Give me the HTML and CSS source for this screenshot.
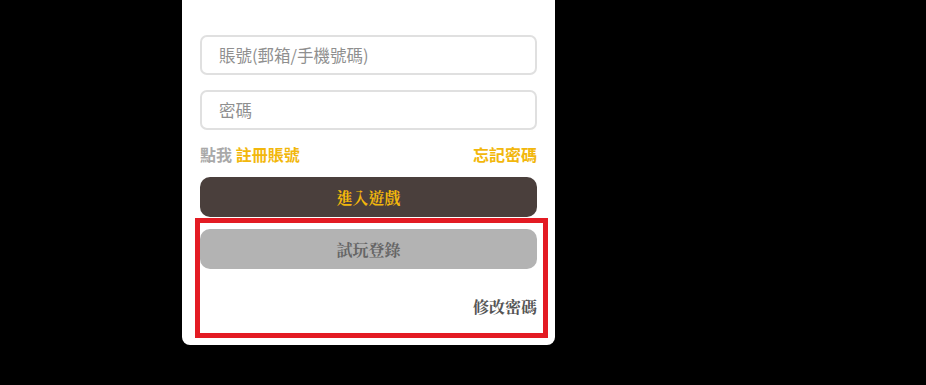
FILE: index.html
```html
<!DOCTYPE html>
<html lang="zh-Hant">
<head>
<meta charset="utf-8">
<title>登錄</title>
<link rel="stylesheet" href="styles.css">
</head>
<body>
<div class="page">
  <div class="card">
    <div class="field"><span class="placeholder">賬號(郵箱/手機號碼)</span></div>
    <div class="field"><span class="placeholder">密碼</span></div>
    <div class="links">
      <div class="reg"><span class="muted">點我</span> <span class="accent">註冊賬號</span></div>
      <span class="accent">忘記密碼</span>
    </div>
    <div class="btn btn-dark">進入遊戲</div>
    <div class="btn btn-gray">試玩登錄</div>
    <div class="change">修改密碼</div>
    <div class="highlight"></div>
  </div>
</div>
</body>
</html>
```
FILE: styles.css
```css
html, body {
  margin: 0;
  padding: 0;
  background: #000;
  height: 100%;
}
body {
  font-family: "Noto Sans CJK TC", "Noto Sans", sans-serif;
}
.page {
  padding-left: 182px;
}
.card {
  position: relative;
  width: 373px;
  box-sizing: border-box;
  background: #fff;
  border-radius: 0 0 8px 8px;
  padding: 35px 18px 26px;
}
.field {
  height: 40px;
  box-sizing: border-box;
  border: 2px solid #e0e0e0;
  border-radius: 7px;
  margin-bottom: 15px;
  display: flex;
  align-items: center;
  padding-left: 17px;
  padding-right: 14px;
}
.field + .field { margin-bottom: 0; }
.placeholder {
  color: #8f8f8f;
  font-size: 16.5px;
}
.links {
  margin-top: 12px;
  height: 24px;
  display: flex;
  justify-content: space-between;
  align-items: center;
  font-size: 16px;
  font-weight: 700;
  line-height: 24px;
}
.muted { color: #a9a9a9; }
.accent { color: #f2b70c; }
.btn {
  height: 40px;
  border-radius: 10px;
  display: flex;
  align-items: center;
  justify-content: center;
  font-size: 16px;
  font-weight: 700;
  font-family: "Noto Serif CJK TC", "Noto Sans CJK TC", serif;
}
.btn-dark {
  margin-top: 11px;
  background: #4a3f3c;
  color: #f2b70c;
}
.btn-gray {
  margin-top: 12px;
  background: #b3b3b3;
  color: #666;
}
.change {
  margin-top: 26px;
  height: 24px;
  line-height: 24px;
  text-align: right;
  font-size: 16px;
  font-weight: 700;
  color: #555;
  font-family: "Noto Serif CJK TC", "Noto Sans CJK TC", serif;
}
.highlight {
  position: absolute;
  left: 13px;
  top: 218px;
  width: 353px;
  height: 120px;
  box-sizing: border-box;
  border: 5px solid #e31b23;
  pointer-events: none;
}
```
